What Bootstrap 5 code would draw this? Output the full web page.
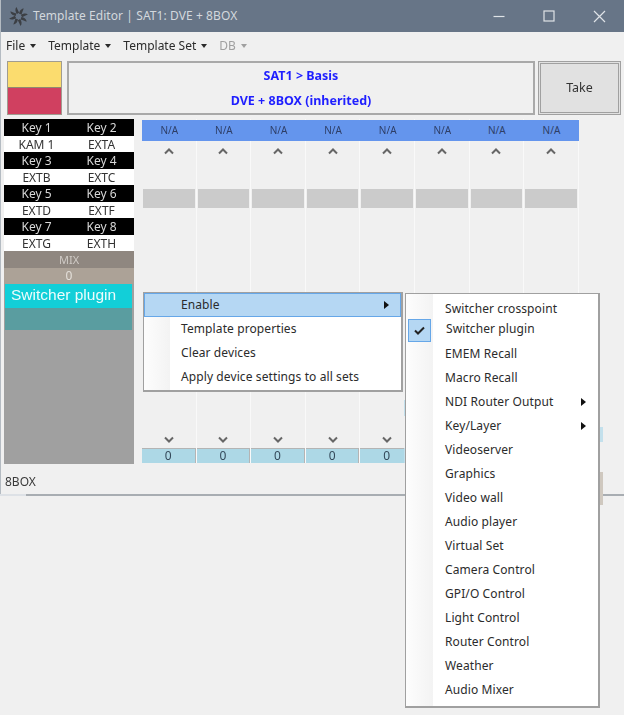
<!DOCTYPE html>
<html lang="en">
<head>
    <meta charset="UTF-8">
    <meta name="viewport" content="width=device-width, initial-scale=1.0">
    <title>Template Editor</title>
    <link href="https://cdn.jsdelivr.net/npm/bootstrap@5.3.0/dist/css/bootstrap.min.css" rel="stylesheet">
    <style>
        body {
            background-color: #f0f0f0;
            font-family: "Noto Sans", "Open Sans", sans-serif;
            font-size: 12px;
            color: #2b2b2b;
            width: 624px;
            height: 715px;
            overflow: hidden;
        }
        .app-root { position: relative; width: 624px; height: 715px; filter: blur(0.35px); }
        .app-window { height: 496px; border-left: 1px solid #b4bbc2; border-bottom: 2px solid #a8adb2; }
        .title-bar { height: 32px; background-color: #677587; color: #d3d8dd; letter-spacing: 0.08px; }
        .title-icon { margin-left: 8px; margin-right: 5px; }
        .win-btn { width: 50px; height: 32px; }
        .menu-bar { height: 28px; padding-left: 5px; gap: 12px; }
        .menu-bar .nav-link { color: #2b2b2b; font-size: 12px; padding: 0; }
        .menu-bar .nav-link.disabled { color: #a0a0a0; }
        .menu-bar .dropdown-toggle::after { border-top-width: 4px; border-left-width: 3.5px; border-right-width: 3.5px; margin-left: 5px; vertical-align: 2px; }

        .head-row { height: 54px; margin-top: 1px; padding-left: 6px; }
        .swatches { width: 55px; border: 1px solid #a09c90; }
        .swatch-top { height: 26px; background-color: #fbdc6e; border-bottom: 1px solid #8f8a70; }
        .swatch-bottom { background-color: #d04060; }
        .title-box { width: 468px; margin-left: 5px; border: 2px solid #a9a9a9; color: #1f1fff; font-weight: 700; font-size: 12.5px; }
        .title-box div { height: 25px; line-height: 25px; }
        .take-btn { width: 83px; margin-left: 3px; border: 3px double #a0a0a0; background-color: #e1e1e1; border-radius: 0; font-size: 12.5px; color: #333; padding: 0; }

        .main-row { height: 345px; margin-top: 4px; padding-left: 3px; }
        .key-panel { width: 130px; background-color: #a0a0a0; }
        .key-grid { display: grid; grid-template-columns: 65px 65px; grid-auto-rows: 16.5px; text-align: center; line-height: 17px; }
        .key-head { background-color: #000; color: #d8d8d8; }
        .key-src { background-color: #fff; color: #333; }
        .mix-row { height: 17px; line-height: 17px; background-color: #8f8780; color: #cfcac5; font-size: 11px; text-align: center; }
        .num-row { height: 16px; line-height: 16px; background-color: #aca297; color: #e4e0da; text-align: center; }
        .plugin-row { height: 24px; margin: 0 2px 0 1px; background-color: #12cfd8; color: #eefcfc; font-family: "Liberation Sans", Arial, sans-serif; font-size: 15.5px; line-height: 22px; padding-left: 6px; }
        .plugin-sub { height: 22px; margin: 0 2px 0 1px; background-color: #5a9da0; }

        .chan-grid { display: grid; grid-template-columns: repeat(8, 54.6px); margin-left: 8px; margin-bottom: 1px; }
        .chan { border-right: 1px solid #f9f9f9; }
        .chan-na { height: 21px; margin-top: 1px; margin-right: -1px; background-color: #6495ed; color: #2e3e66; font-size: 10px; line-height: 21px; text-align: center; }
        .chan-up { margin-top: 4px; }
        .chan-bar { height: 19px; margin: 32px 1px 0 1px; background-color: #cbcbcb; }
        .chan-down { margin-bottom: 3px; }
        .chan-zero { height: 15px; background-color: #add8e6; border-top: 1px solid #b4b4b4; border-right: 1px solid #b4b4b4; color: #34495a; line-height: 14px; text-align: center; }
        .status-text { padding: 9px 0 0 4px; color: #3a3a3a; }

        .ctx-menu { position: absolute; display: block; min-width: 0; padding: 0; border-radius: 0; border: 1px solid #a0a0a0; border-right-width: 2px; border-bottom-width: 2px; background-color: #fff; font-size: 12px; letter-spacing: 0.1px; margin: 0; }
        .ctx-gutter { position: absolute; left: 0; top: 0; bottom: 0; background-image: linear-gradient(to right, #fdfdfd, #f3f3f3); }
        .ctx-menu .dropdown-item { position: relative; height: 24px; line-height: 24px; padding: 0; color: #2b2b2b; background: transparent; }
        .ctx-main { left: 143px; top: 292px; width: 260px; height: 100px; }
        .ctx-main .ctx-gutter { width: 26px; }
        .ctx-main .dropdown-item { padding-left: 37px; }
        .ctx-main .dropdown-item.is-hot { background-color: #b5d7f3; outline: 1px solid #66a7e8; outline-offset: -1px; }
        .ctx-sub { left: 405px; top: 293px; width: 195px; height: 415px; padding-top: 3px; }
        .ctx-sub .ctx-gutter { width: 27px; }
        .ctx-sub .dropdown-item { padding-left: 39px; }
        .ctx-sub .dropdown-item.is-checked { height: 21px; line-height: 16px; padding-left: 40px; }
        .check-box { position: absolute; left: 2px; top: -2px; width: 23px; height: 23px; background-color: #b5d7f3; border: 1px solid #66a7e8; }
        .item-arrow { position: absolute; top: 8px; width: 0; height: 0; border-left: 5px solid #111; border-top: 4px solid transparent; border-bottom: 4px solid transparent; }
        .ctx-main .item-arrow { left: 240px; }
        .ctx-sub .item-arrow { left: 175px; }
        .sliver { position: absolute; width: 3px; }
        .sliver-blue { background-color: #c3e0ec; }
        .sliver-tan { background-color: #cfc8bf; }
        .corner-line { position: absolute; left: 0; top: 494px; width: 26px; height: 2px; background-color: #dde1e6; }
    </style>
</head>
<body>
<div class="app-root">
    <div class="app-window d-flex flex-column">
        <div class="title-bar d-flex align-items-center">
            <svg class="title-icon" width="19" height="19" viewBox="-10 -10 20 20">
                <defs><path id="blade" d="M0.6 -3 C1 -6 3 -8.5 5.5 -8.5 C4.5 -6.5 4 -4.5 3.2 -2.2 Z" fill="#3c3f44"/></defs>
                <use href="#blade"/><use href="#blade" transform="rotate(45)"/><use href="#blade" transform="rotate(90)"/><use href="#blade" transform="rotate(135)"/>
                <use href="#blade" transform="rotate(180)"/><use href="#blade" transform="rotate(225)"/><use href="#blade" transform="rotate(270)"/><use href="#blade" transform="rotate(315)"/>
            </svg>
            <span>Template Editor | SAT1: DVE + 8BOX</span>
            <div class="ms-auto d-flex">
                <div class="win-btn d-flex align-items-center justify-content-center">
                    <svg width="12" height="12" viewBox="0 0 12 12"><path d="M0.5 6.5H11.5" stroke="#dfe3e7" stroke-width="1.2"/></svg>
                </div>
                <div class="win-btn d-flex align-items-center justify-content-center">
                    <svg width="12" height="12" viewBox="0 0 12 12"><rect x="1" y="1" width="10" height="10" fill="none" stroke="#dfe3e7" stroke-width="1.2"/></svg>
                </div>
                <div class="win-btn d-flex align-items-center justify-content-center">
                    <svg width="13" height="13" viewBox="0 0 13 13"><path d="M1 1L12 12M12 1L1 12" stroke="#dfe3e7" stroke-width="1.2"/></svg>
                </div>
            </div>
        </div>

        <nav class="nav menu-bar align-items-center">
            <a class="nav-link dropdown-toggle" href="#">File</a>
            <a class="nav-link dropdown-toggle" href="#">Template</a>
            <a class="nav-link dropdown-toggle" href="#">Template Set</a>
            <a class="nav-link dropdown-toggle disabled" href="#">DB</a>
        </nav>

        <div class="head-row d-flex">
            <div class="swatches d-flex flex-column">
                <div class="swatch-top"></div>
                <div class="swatch-bottom flex-grow-1"></div>
            </div>
            <div class="title-box text-center">
                <div>SAT1 &gt; Basis</div>
                <div>DVE + 8BOX (inherited)</div>
            </div>
            <button type="button" class="btn take-btn">Take</button>
        </div>

        <div class="main-row d-flex">
            <div class="key-panel">
                <div class="key-grid">
                    <div class="key-head">Key 1</div><div class="key-head">Key 2</div>
                    <div class="key-src">KAM 1</div><div class="key-src">EXTA</div>
                    <div class="key-head">Key 3</div><div class="key-head">Key 4</div>
                    <div class="key-src">EXTB</div><div class="key-src">EXTC</div>
                    <div class="key-head">Key 5</div><div class="key-head">Key 6</div>
                    <div class="key-src">EXTD</div><div class="key-src">EXTF</div>
                    <div class="key-head">Key 7</div><div class="key-head">Key 8</div>
                    <div class="key-src">EXTG</div><div class="key-src">EXTH</div>
                </div>
                <div class="mix-row">MIX</div>
                <div class="num-row">0</div>
                <div class="plugin-row">Switcher plugin</div>
                <div class="plugin-sub"></div>
            </div>
            <div class="chan-grid" id="chans"></div>
        </div>

        <div class="status-text">8BOX</div>
    </div>

    <span class="corner-line"></span>
    <span class="sliver sliver-blue" style="left: 404px; top: 400px; height: 16px"></span>
    <span class="sliver sliver-blue" style="left: 404px; top: 448px; height: 15px"></span>
    <span class="sliver sliver-blue" style="left: 600px; top: 427px; height: 15px"></span>
    <span class="sliver sliver-tan" style="left: 600px; top: 472px; height: 33px"></span>

    <div class="dropdown-menu ctx-menu ctx-main">
        <div class="ctx-gutter"></div>
        <a class="dropdown-item is-hot" href="#">Enable<span class="item-arrow"></span></a>
        <a class="dropdown-item" href="#">Template properties</a>
        <a class="dropdown-item" href="#">Clear devices</a>
        <a class="dropdown-item" href="#">Apply device settings to all sets</a>
    </div>

    <div class="dropdown-menu ctx-menu ctx-sub">
        <div class="ctx-gutter"></div>
        <a class="dropdown-item" href="#">Switcher crosspoint</a>
        <a class="dropdown-item is-checked" href="#">
            <span class="check-box d-flex align-items-center justify-content-center">
                <svg width="11" height="9" viewBox="0 0 11 9"><path d="M1 4.5L4 7.5L10 1.5" fill="none" stroke="#222" stroke-width="2"/></svg>
            </span>Switcher plugin</a>
        <a class="dropdown-item" href="#">EMEM Recall</a>
        <a class="dropdown-item" href="#">Macro Recall</a>
        <a class="dropdown-item" href="#">NDI Router Output<span class="item-arrow"></span></a>
        <a class="dropdown-item" href="#">Key/Layer<span class="item-arrow"></span></a>
        <a class="dropdown-item" href="#">Videoserver</a>
        <a class="dropdown-item" href="#">Graphics</a>
        <a class="dropdown-item" href="#">Video wall</a>
        <a class="dropdown-item" href="#">Audio player</a>
        <a class="dropdown-item" href="#">Virtual Set</a>
        <a class="dropdown-item" href="#">Camera Control</a>
        <a class="dropdown-item" href="#">GPI/O Control</a>
        <a class="dropdown-item" href="#">Light Control</a>
        <a class="dropdown-item" href="#">Router Control</a>
        <a class="dropdown-item" href="#">Weather</a>
        <a class="dropdown-item" href="#">Audio Mixer</a>
    </div>
</div>

<script src="https://cdn.jsdelivr.net/npm/bootstrap@5.3.0/dist/js/bootstrap.bundle.min.js"></script>
<script>
    // the 8 channel strips are all the same, the last 3 zeros sit under the open menu
    const up = '<svg width="10" height="7" viewBox="0 0 10 7"><path d="M1 5.5L5 1.5L9 5.5" fill="none" stroke="#666" stroke-width="2"/></svg>';
    const down = '<svg width="10" height="7" viewBox="0 0 10 7"><path d="M1 1.5L5 5.5L9 1.5" fill="none" stroke="#666" stroke-width="2"/></svg>';
    let html = '';
    for (let i = 0; i < 8; i++) {
        html += `<div class="chan d-flex flex-column">
            <div class="chan-na">N/A</div>
            <div class="chan-up text-center lh-1">${up}</div>
            <div class="chan-bar"></div>
            <div class="chan-down text-center lh-1 mt-auto">${down}</div>
            <div class="chan-zero">${i < 5 ? '0' : ''}</div>
        </div>`;
    }
    document.getElementById('chans').innerHTML = html;
</script>
</body>
</html>
